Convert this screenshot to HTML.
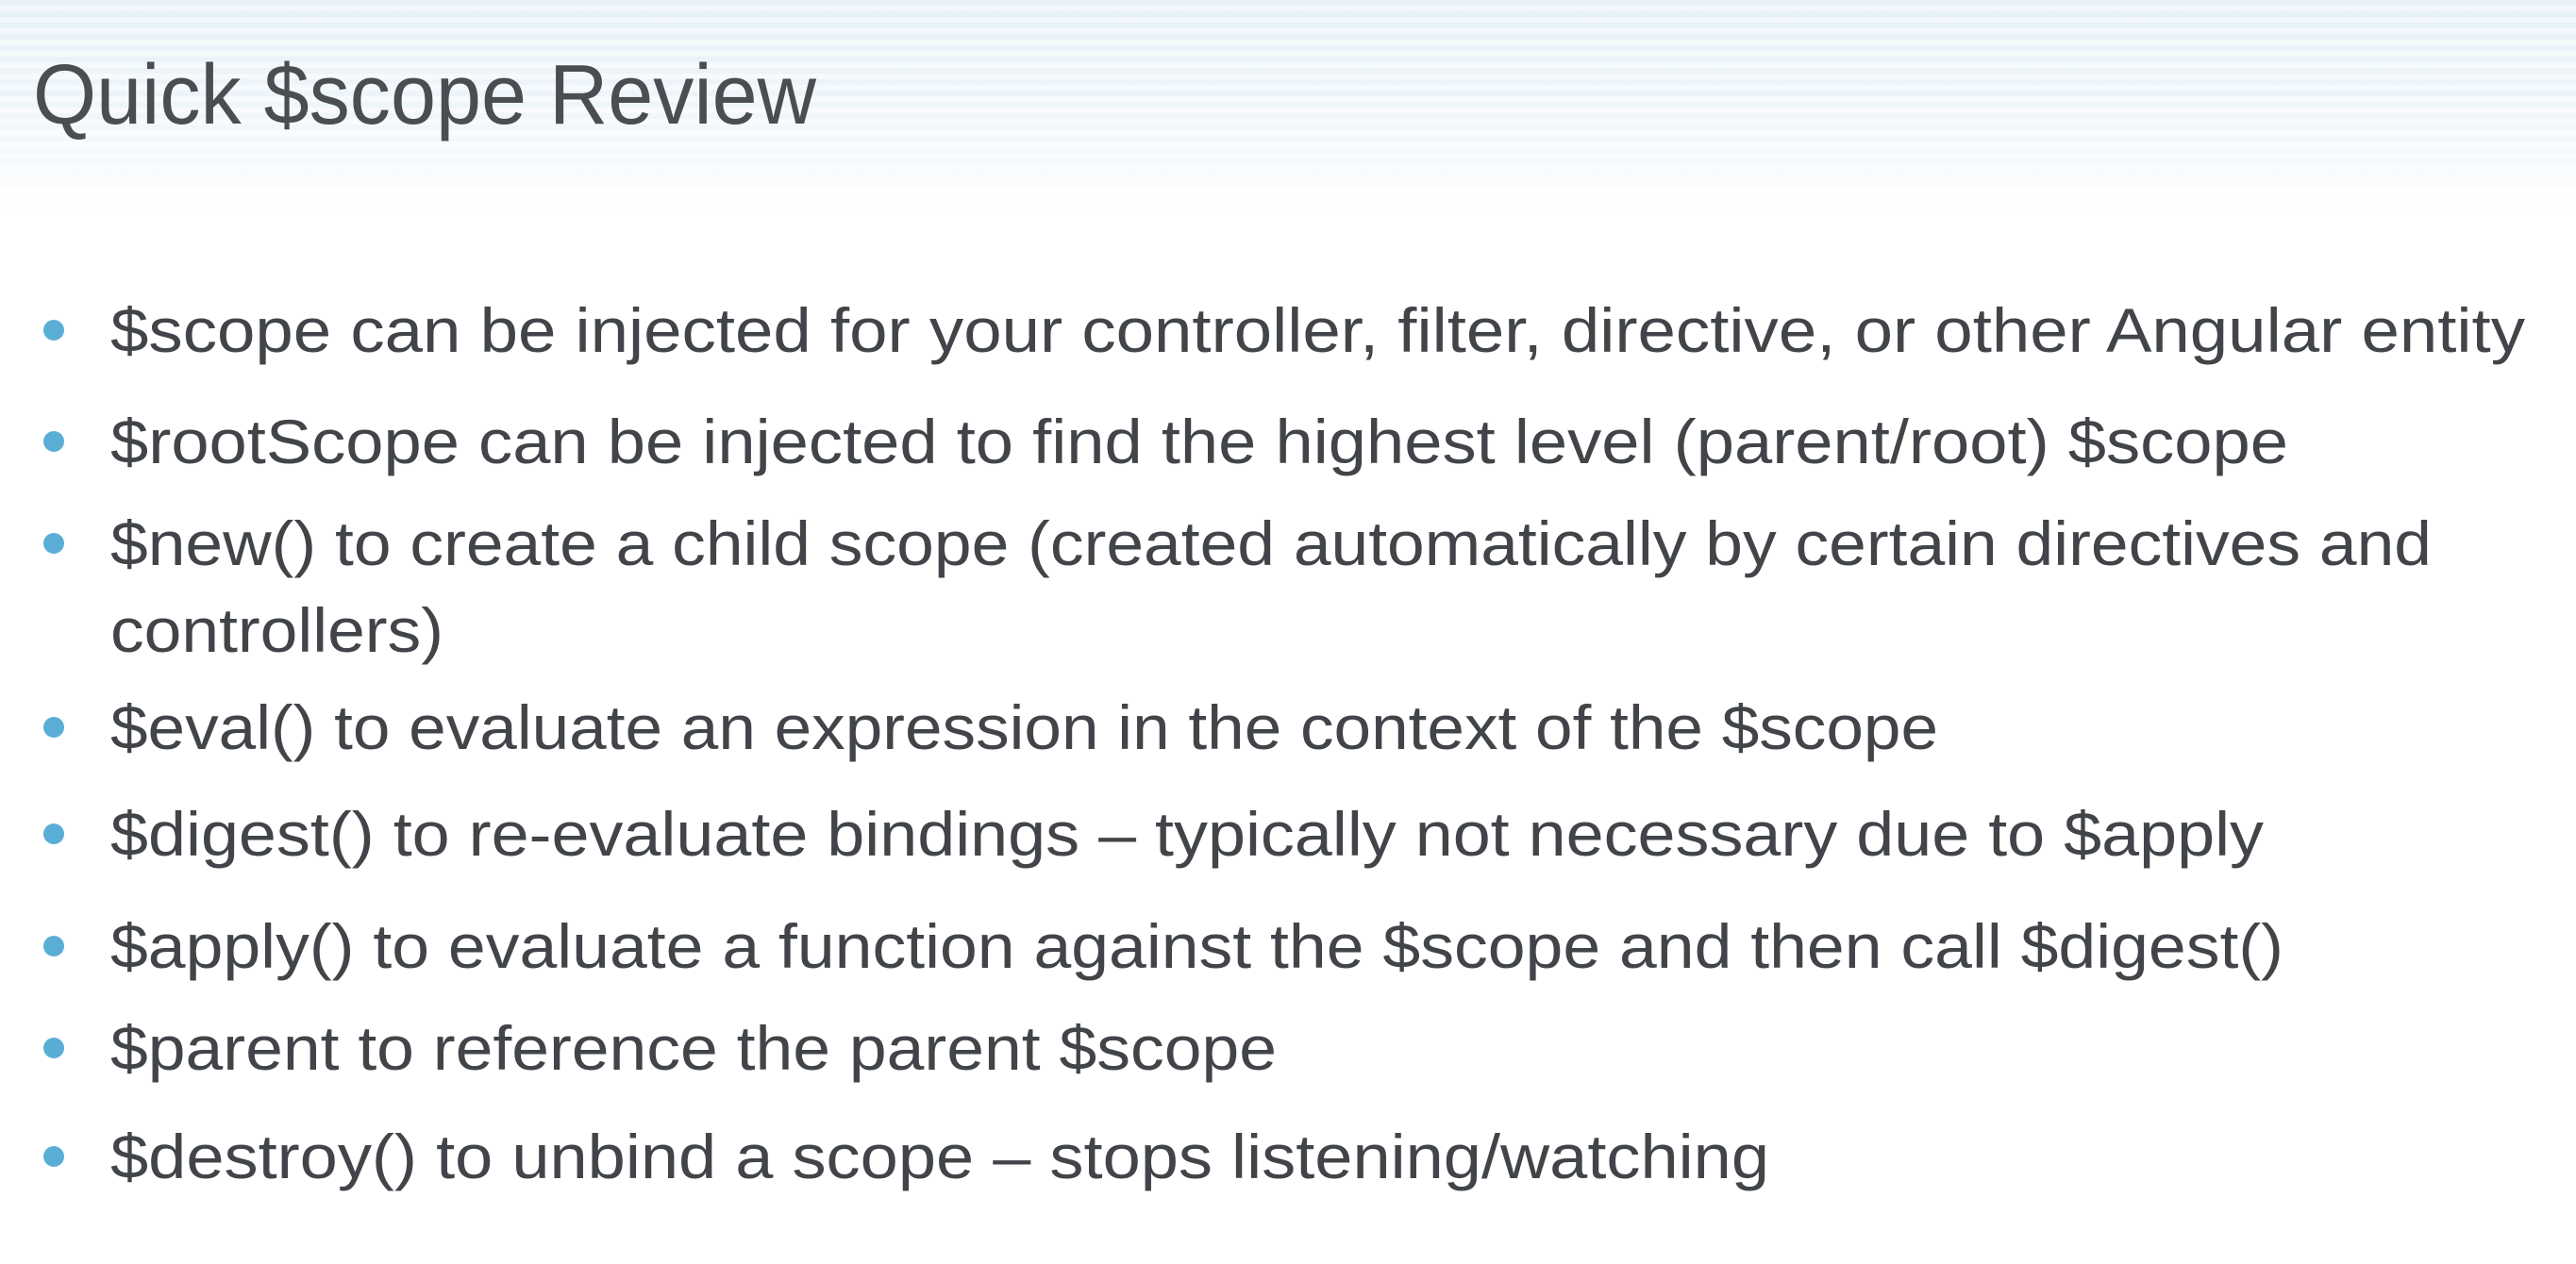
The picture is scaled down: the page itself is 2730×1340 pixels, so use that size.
<!DOCTYPE html>
<html><head><meta charset="utf-8"><style>
html,body{margin:0;padding:0;width:2730px;height:1340px;overflow:hidden;background:#fff}
.hdr{position:absolute;left:0;top:0;width:2730px;height:230px;
background:repeating-linear-gradient(180deg,rgba(255,255,255,0) 0px,rgba(255,255,255,0) 6px,rgba(255,255,255,.5) 6px,rgba(255,255,255,.5) 12px),linear-gradient(180deg,#e6f1f8 0%,#eef5fa 45%,#f7fafd 75%,#fff 100%)}
svg{position:absolute;left:0;top:0}
text{font-family:"Liberation Sans",sans-serif}
</style></head><body>
<div class="hdr"></div>
<svg width="2730" height="1340">
<text x="35" y="131" font-size="90" fill="#4a4d52" textLength="830" lengthAdjust="spacingAndGlyphs">Quick $scope Review</text>
<g fill="#5aaed6">
<circle cx="57" cy="350" r="11"/><circle cx="57" cy="468" r="11"/><circle cx="57" cy="576" r="11"/>
<circle cx="57" cy="771" r="11"/><circle cx="57" cy="884" r="11"/><circle cx="57" cy="1003" r="11"/>
<circle cx="57" cy="1111" r="11"/><circle cx="57" cy="1226" r="11"/>
</g>
<g font-size="66" fill="#414448">
<text x="117" y="373" textLength="2559" lengthAdjust="spacingAndGlyphs">$scope can be injected for your controller, filter, directive, or other Angular entity</text>
<text x="117" y="491" textLength="2308" lengthAdjust="spacingAndGlyphs">$rootScope can be injected to find the highest level (parent/root) $scope</text>
<text x="117" y="599" textLength="2460" lengthAdjust="spacingAndGlyphs">$new() to create a child scope (created automatically by certain directives and</text>
<text x="117" y="691" textLength="353" lengthAdjust="spacingAndGlyphs">controllers)</text>
<text x="117" y="794" textLength="1937" lengthAdjust="spacingAndGlyphs">$eval() to evaluate an expression in the context of the $scope</text>
<text x="117" y="907" textLength="2282" lengthAdjust="spacingAndGlyphs">$digest() to re-evaluate bindings – typically not necessary due to $apply</text>
<text x="117" y="1026" textLength="2303" lengthAdjust="spacingAndGlyphs">$apply() to evaluate a function against the $scope and then call $digest()</text>
<text x="117" y="1134" textLength="1236" lengthAdjust="spacingAndGlyphs">$parent to reference the parent $scope</text>
<text x="117" y="1249" textLength="1758" lengthAdjust="spacingAndGlyphs">$destroy() to unbind a scope – stops listening/watching</text>
</g>
</svg>
</body></html>
